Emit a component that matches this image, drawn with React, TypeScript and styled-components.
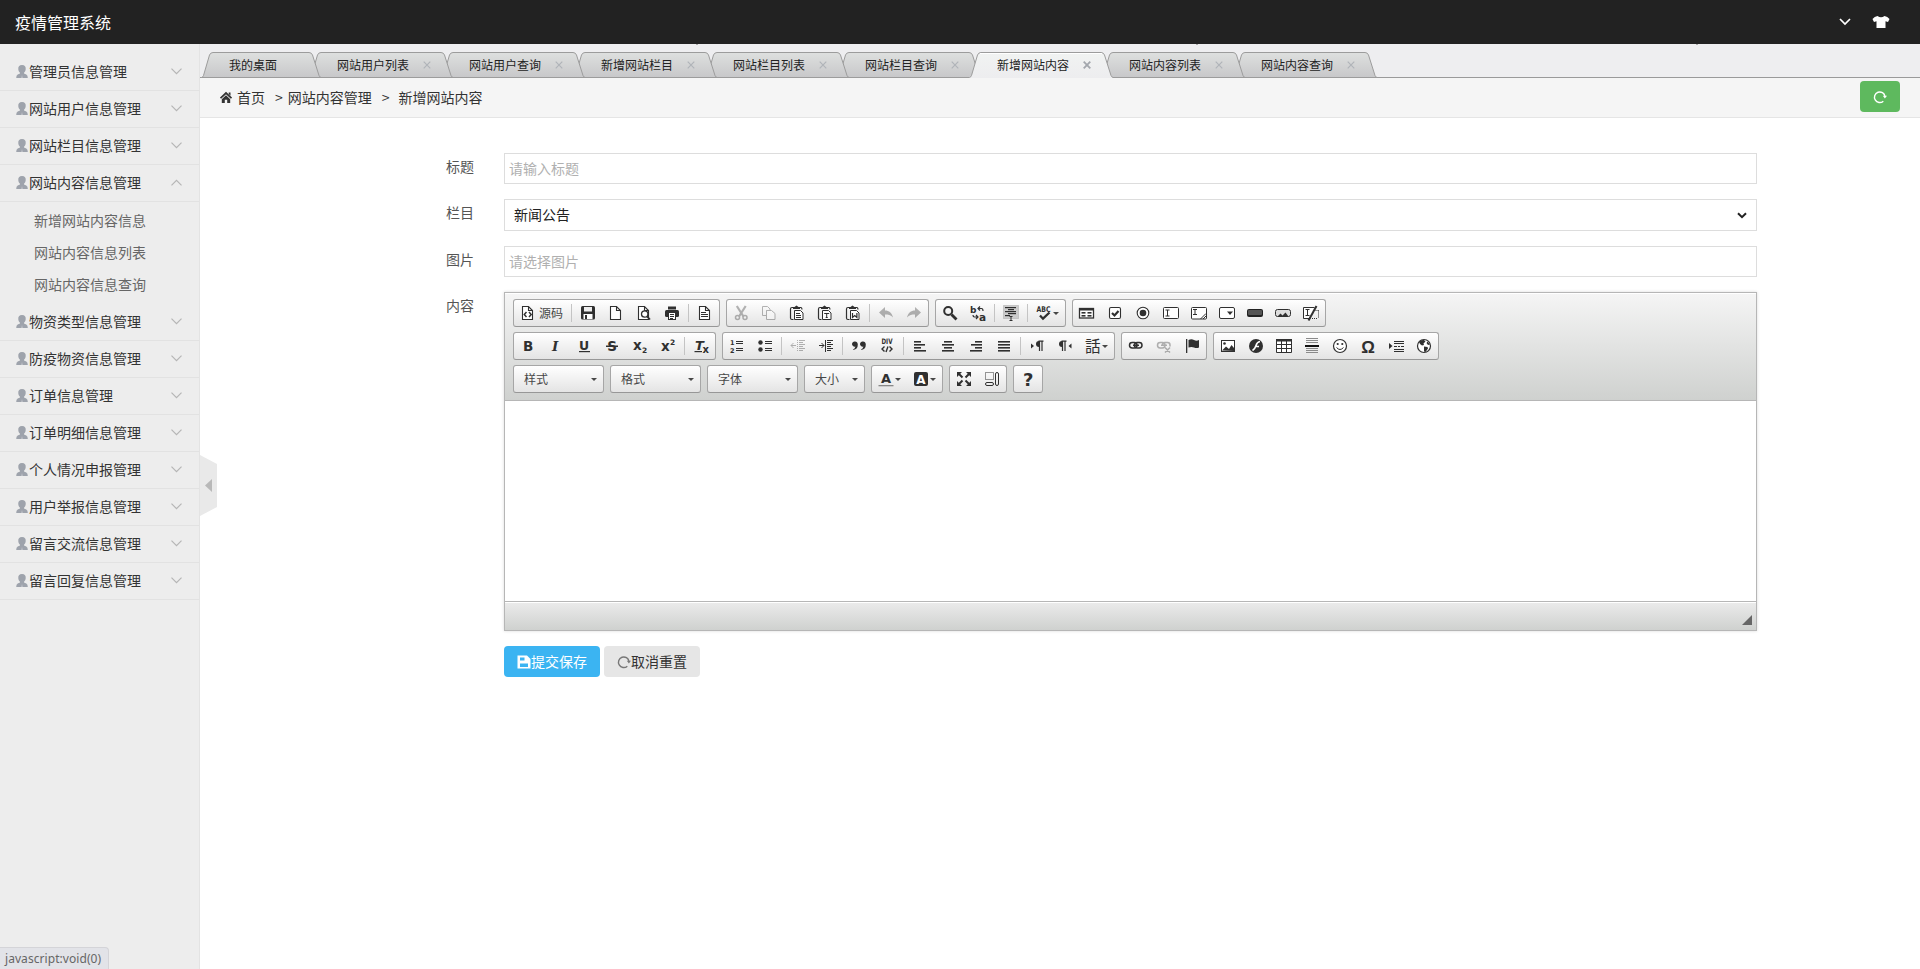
import React, { useState } from "react";
import styled, { createGlobalStyle } from "styled-components";

const GlobalStyle = createGlobalStyle`
  * { box-sizing: border-box; }
  html, body, #root { height: 100%; }
  body {
    margin: 0;
    overflow: hidden;
    background: #fff;
    color: #333;
    font-family: "Noto Sans CJK SC", sans-serif;
    font-size: 14px;
  }
`;

/* ---------- page frame ---------- */

const Page = styled.div`
  display: flex;
  flex-direction: column;
  height: 969px;
  width: 1920px;
  position: relative;
`;

const TopBar = styled.header`
  flex: 0 0 44px;
  display: flex;
  align-items: center;
  justify-content: space-between;
  padding: 0 30px 0 15px;
  background: #222;
  color: #fff;
`;

const Brand = styled.a`
  padding-bottom: 1px;
  font-size: 16px;
  line-height: 42px;
`;

const TopActions = styled.div`
  display: flex;
  align-items: center;
  gap: 21px;
  svg { display: block; }
`;

const Body = styled.div`
  flex: 1;
  display: flex;
  min-height: 0;
`;

const Sidebar = styled.aside`
  flex: 0 0 200px;
  padding-top: 10px;
  background: #ededed;
  border-right: 1px solid #e3e3e3;
`;

const MenuTitle = styled.div`
  display: flex;
  align-items: center;
  height: 37px;
  padding: 0 17px 0 16px;
  border-bottom: 1px solid #e2e2e2;
  color: #333;
  cursor: pointer;
`;

const MenuText = styled.span`
  flex: 1;
  padding: 0 0 2px 1px;
  line-height: 34px;
`;

const Arrow = styled.svg<{ $open?: boolean }>`
  margin-bottom: 2px;
  transform: ${(p) => (p.$open ? "rotate(180deg)" : "none")};
`;

const SubMenu = styled.ul`
  margin: 0;
  padding: 2px 0 4px 34px;
  list-style: none;
`;

const SubItem = styled.li`
  height: 32px;
  line-height: 32px;
  color: #666;
`;

const Main = styled.main`
  flex: 1;
  min-width: 0;
  position: relative;
`;

const Collapse = styled.svg`
  position: absolute;
  left: 0;
  top: 411px;
`;

/* ---------- tabs ---------- */

const TabStrip = styled.nav`
  display: flex;
  align-items: flex-end;
  height: 34px;
  padding-left: 1px;
  background:
    linear-gradient(90deg, transparent 496px, #aaa 496px, #aaa 498px, transparent 498px) 0 0 / 500px 1px repeat-x,
    linear-gradient(#9a9a9a, #9a9a9a) 0 100% / 100% 1px no-repeat,
    #eeeef0;
`;

const TabBox = styled.div<{ $order: number; $width: number }>`
  position: relative;
  z-index: ${(p) => p.$order};
  display: flex;
  align-items: center;
  gap: 14px;
  width: ${(p) => p.$width}px;
  height: 26px;
  margin-right: -12px;
  padding-left: 28px;
  font-size: 12px;
  line-height: 26px;
  color: #222;
`;

const TabShape = styled.svg`
  position: absolute;
  left: 0;
  top: 0;
  z-index: -1;
`;

/* ---------- breadcrumb ---------- */

const Crumbs = styled.div`
  display: flex;
  align-items: center;
  height: 40px;
  padding: 0 20px;
  background: #f5f5f5;
  border-bottom: 1px solid #e5e5e5;
  line-height: 39px;
`;

const Crumb = styled.span<{ $gap?: number }>`
  margin-left: ${(p) => p.$gap ?? 0}px;
`;

const RefreshButton = styled.button`
  display: flex;
  align-items: center;
  justify-content: center;
  width: 40px;
  height: 31px;
  margin: 0 0 2px auto;
  padding: 0;
  border: 0;
  border-radius: 4px;
  background: #5eb95e;
`;

/* ---------- form ---------- */

const Form = styled.form`
  display: flex;
  flex-direction: column;
  gap: 15px;
  padding-top: 35px;
`;

const Row = styled.div`
  display: grid;
  grid-template-columns: 274px 1253px;
  column-gap: 30px;
`;

const Label = styled.label`
  height: 28px;
  line-height: 26px;
  text-align: right;
  color: #555;
`;

const TextInput = styled.input`
  display: block;
  width: 100%;
  height: 31px;
  padding: 0 4px 1px;
  border: 1px solid #ddd;
  background: #fff;
  font: inherit;
  color: #333;
  outline: none;
  &::placeholder { color: #b0b0b0; }
`;

const SelectWrap = styled.div`
  display: flex;
  align-items: center;
  height: 32px;
  padding-right: 9px;
  border: 1px solid #ddd;
  background: #fff;
`;

const Select = styled.select`
  flex: 1;
  height: 30px;
  padding: 0 9px 2px;
  border: 0;
  appearance: none;
  background: transparent;
  font: inherit;
  color: #222;
  outline: none;
`;

const Actions = styled.div`
  display: flex;
  gap: 4px;
  padding-left: 304px;
`;

const Button = styled.button<{ $primary?: boolean }>`
  display: flex;
  align-items: center;
  justify-content: center;
  width: 96px;
  height: 31px;
  padding: 0;
  border: 0;
  border-radius: 4px;
  background: ${(p) => (p.$primary ? "#3bb4f2" : "#e6e6e6")};
  color: ${(p) => (p.$primary ? "#fff" : "#333")};
  font: inherit;
  line-height: 31px;
`;

/* ---------- rich text editor ---------- */

const Editor = styled.div`
  border: 1px solid #b6b6b6;
  box-shadow: 0 0 3px rgba(0, 0, 0, 0.15);
`;

const Toolbox = styled.div`
  display: flex;
  flex-direction: column;
  height: 108px;
  gap: 5px;
  padding: 6px 8px 0;
  border-bottom: 1px solid #b6b6b6;
  background: linear-gradient(#f5f5f5, #cfd1cf);
  box-shadow: inset 0 1px 0 #fff;
`;

const ToolRow = styled.div`
  display: flex;
  gap: 6px;
`;

const ToolGroup = styled.div<{ $width?: number }>`
  display: flex;
  align-items: center;
  width: ${(p) => (p.$width ? `${p.$width}px` : "auto")};
  height: 28px;
  border: 1px solid #a6a6a6;
  border-bottom-color: #979797;
  border-radius: 3px;
  background: linear-gradient(#fff, #e4e4e4);
`;

const ToolButton = styled.span<{ $disabled?: boolean }>`
  display: flex;
  align-items: center;
  height: 26px;
  padding: 0 6px;
  opacity: ${(p) => (p.$disabled ? 0.35 : 1)};
  svg { display: block; flex: none; }
`;

const ToolLabel = styled.span`
  width: 27px;
  padding-left: 3px;
  font-size: 12px;
  line-height: 24px;
  color: #474747;
  white-space: nowrap;
`;

const Separator = styled.span`
  width: 1px;
  height: 18px;
  margin: 0 2px;
  background: #c4c4c4;
`;

const Caret = styled.i<{ $combo?: boolean }>`
  margin-left: ${(p) => (p.$combo ? "auto" : "1px")};
  margin-right: ${(p) => (p.$combo ? "6px" : "0")};
  border: solid transparent;
  border-width: 3px 3px 0;
  border-top-color: #474747;
`;

const ComboLabel = styled.span`
  padding-left: 10px;
  font-size: 12px;
  line-height: 24px;
  color: #474747;
`;

const EditArea = styled.div`
  height: 200px;
  background: #fff;
`;

const EditorFoot = styled.div`
  display: flex;
  align-items: flex-end;
  justify-content: flex-end;
  height: 29px;
  padding: 0 4px 5px 0;
  border-top: 1px solid #b6b6b6;
  background: linear-gradient(#ebebeb, #cfd1cf);
  box-shadow: inset 0 1px 0 #fff;
`;

const StatusBubble = styled.div`
  position: absolute;
  left: 0;
  bottom: 0;
  width: 109px;
  height: 22px;
  padding-left: 5px;
  border: 1px solid #d4d4d8;
  border-width: 1px 1px 0 0;
  border-radius: 0 4px 0 0;
  background: #e2e3e8;
  font-family: "Noto Sans", sans-serif;
  font-size: 12px;
  letter-spacing: 0.06px;
  line-height: 21px;
  color: #666;
`;

/* ---------- icons ---------- */

const D = "#303030";
const line = { fill: "none", stroke: D, strokeWidth: 1 } as const;
const bold = { fontFamily: "DejaVu Sans, sans-serif", fontWeight: 700, fill: D } as const;
const doc = <path d="M2.500 1.500h6l4 4v9h-10zM8.500 1.500v4h4" fill="#fff" stroke={D} strokeWidth="1.100" />;
const board = (
  <>
    <path d="M4.500 14.500h-1.500q-1.500 0-1.500-1.500V4q0-1.500 1.500-1.500h1M10.500 2.500h1.500q1 .5 1 2" {...line} strokeWidth={1.200} />
    <path d="M4 4V2h1.500L7.500.500 9.500 2H11v2z" fill={D} />
    <path d="M5.500 5.500h6l2.500 2.500v6.500h-8.500z" fill="#fff" stroke={D} />
  </>
);
const bars = (rows: number[][]) => rows.map(([x, y, w, h = 1], i) => <rect key={i} x={x} y={y} width={w} height={h} fill={D} />);

const ICONS: Record<string, React.ReactNode> = {
  source: <>{doc}<path d="M6.500 7L4.300 9.500 6.500 12M9 7l2.200 2.500L9 12" {...line} strokeWidth={1.500} /></>,
  save: (
    <>
      <rect x="1" y="1" width="14" height="13.500" rx="1.500" fill={D} />
      <rect x="4" y="2" width="8" height="4.500" fill="#eee" />
      <rect x="3.500" y="9" width="9" height="5" fill="#fff" />
      <rect x="5" y="10" width="2" height="4" fill={D} />
    </>
  ),
  newpage: doc,
  preview: <>{doc}<circle cx="8.700" cy="9" r="3.200" fill="#fff" stroke={D} strokeWidth="1.300" /><path d="M11 11.300l3 3.200" stroke={D} strokeWidth="1.800" /></>,
  print: (
    <>
      <rect x="4" y="1.500" width="8" height="3" fill={D} />
      <rect x="1" y="5" width="14" height="7" rx="1.500" fill={D} />
      <rect x="4.500" y="7.500" width="7" height="7" fill="#fff" stroke={D} />
      {bars([[6, 9, 4], [6, 11, 4], [6, 13, 3]])}
    </>
  ),
  templates: <>{doc}{bars([[4, 7, 5], [4, 9, 7], [4, 11, 7]])}</>,
  cut: (
    <g {...line} strokeWidth={2.200}>
      <path d="M3.800 1l6.700 10.500M12.700 1L6 11.500" />
      <circle cx="4.500" cy="12.500" r="2" strokeWidth="1.500" />
      <circle cx="12" cy="12.500" r="2" strokeWidth="1.500" />
    </g>
  ),
  copy: <g {...line}><path d="M1.500 1.500h5l2.500 2.500v1.500h-3.500v5h-4z" /><path d="M5.500 5.500h5l3.500 3v6h-8.500z" fill="#fff" /></g>,
  paste: <>{board}{bars([[7, 8, 4], [7, 10, 5], [7, 12, 5]])}</>,
  pastetext: <>{board}<path d="M7.200 8.500h5M9.700 8.500v4.500M8.700 12.500h2" {...line} /></>,
  pasteword: <>{board}<path d="M7.500 8v4.500l2.200-2 2.200 2V8" {...line} strokeWidth={1.200} /></>,
  undo: <path d="M1 7.500L7 2v3.500c4 0 7 2.500 8 7-2-2.500-5-3-8-3V13z" fill={D} />,
  redo: <path d="M15 7.500L9 2v3.500c-4 0-7 2.500-8 7 2-2.500 5-3 8-3V13z" fill={D} />,
  find: <><circle cx="6.200" cy="6" r="4" fill="none" stroke={D} strokeWidth="2" /><path d="M9.500 9.500l5 5" stroke={D} strokeWidth="2.800" /></>,
  replace: (
    <>
      <text x="0" y="7.500" fontSize="9" {...bold}>b</text>
      <text x="9" y="15.500" fontSize="10.500" {...bold}>a</text>
      <path d="M8 3.500h3.500q1.500 0 1.500 2.500M10 1.500l-2 2 2 2M3 10q0 2 1.500 2H8M6 10l2 2-2 2" {...line} strokeWidth={1.200} />
    </>
  ),
  selectall: (
    <>
      <rect x="0.500" y="0.500" width="15" height="13" fill="#ccc" stroke="#aaa" strokeDasharray="1 1" />
      {bars([[2, 2, 11, 1.200], [5, 4, 6, 1.200], [2, 6, 11, 1.200], [5, 8, 8, 1.200], [2, 10, 5, 1.200]])}
      <path d="M6.500 11.500h3M6.500 15.500h3M8 11.500v4" {...line} />
    </>
  ),
  spell: <><text x="0.500" y="7.300" fontSize="7.800" textLength="14" lengthAdjust="spacingAndGlyphs" {...bold}>ABC</text><path d="M4 10.500l3 3.200L13.500 7.500" {...line} strokeWidth={2.300} /></>,
  form: <><rect x="0.500" y="3.500" width="14" height="9.500" fill="#fff" stroke={D} strokeWidth="1.300" />{bars([[0, 3, 15, 2.500], [2.500, 7, 4, 1.600], [2.500, 10, 4, 1.600], [8.500, 7, 4, 1.600], [8.500, 10, 4, 1.600]])}</>,
  checkbox: <><rect x="2.500" y="2.500" width="11" height="11" rx="1.500" fill="#fff" stroke={D} strokeWidth="1.100" /><path d="M5 8l2.500 2.500L11.500 6" {...line} strokeWidth={2.200} /></>,
  radio: <><circle cx="8" cy="8" r="5.800" fill="#fff" stroke={D} strokeWidth="1.100" /><circle cx="8" cy="8" r="3.300" fill={D} /></>,
  textfield: <><rect x="0.500" y="2.500" width="15" height="11" rx="1" fill="#fff" stroke={D} /><path d="M2.500 5h4M2.500 11h4M4.500 5v6" {...line} /></>,
  textarea: <><rect x="0.500" y="2.500" width="15" height="11.500" rx="1" fill="#fff" stroke={D} /><path d="M2 4.500h4M2 9.500h4M4 4.500v5M9.500 14L15 8.500M12 14l3-3" {...line} /></>,
  select: <><rect x="0.500" y="2.500" width="15" height="11" rx="1.500" fill="#fff" stroke={D} /><path d="M8 6.500h6L11 10z" fill={D} /></>,
  button: <><rect x="0" y="4" width="16" height="8" rx="2" fill="#222" /><rect x="1" y="5" width="14" height="5" rx="1" fill="#555" /></>,
  imagebutton: <><rect x="0.500" y="4.500" width="15" height="7" rx="2" fill="#ddd" stroke={D} /><path d="M2.500 11.500l3-3 2 2 3-3 3 4z" fill={D} /></>,
  hidden: <><path d="M7.500 13.500h-7v-11h11" fill="#fff" stroke={D} /><path d="M2.500 4.500h4M2.500 10.500h4M4.500 4.500v6" {...line} /><path d="M12.500 5.500h3M15.500 5.500v8M9 13.500h6" {...line} strokeDasharray="1 1" /><path d="M5.500 15.500L13.500 1" stroke={D} strokeWidth="2" /></>,
  bold: <text x="3" y="13" fontSize="13.500" {...bold}>B</text>,
  italic: <text x="4" y="13" fontSize="13.500" fontStyle="italic" {...bold} fontFamily="DejaVu Serif">I</text>,
  underline: <><text x="3" y="11.500" fontSize="12.500" {...bold}>U</text><rect x="3" y="13" width="11" height="1.200" fill={D} /></>,
  strike: <><text x="3.300" y="13" fontSize="13.500" {...bold}>S</text><rect x="2" y="7.500" width="12" height="1.500" fill={D} /></>,
  sub: <><text x="1" y="11.500" fontSize="13.500" {...bold}>x</text><text x="10" y="15" fontSize="7.500" {...bold}>2</text></>,
  sup: <><text x="1" y="13" fontSize="13.500" {...bold}>x</text><text x="10" y="7" fontSize="7.500" {...bold}>2</text></>,
  removeformat: <><text x="2" y="11.500" fontSize="13" fontStyle="italic" {...bold}>T</text><rect x="1.500" y="13" width="7.500" height="1.200" fill={D} /><text x="9.500" y="15" fontSize="10" {...bold}>x</text></>,
  ol: <><text x="1" y="6.500" fontSize="6.500" {...bold}>1</text><text x="1" y="14.500" fontSize="6.500" {...bold}>2</text>{bars([[7, 3, 7], [7, 5, 7], [7, 10, 7], [7, 12, 7]])}</>,
  ul: <><circle cx="3.500" cy="4.500" r="2.200" fill={D} /><circle cx="3.500" cy="11.500" r="2.200" fill={D} />{bars([[8, 3, 7], [8, 5, 7], [8, 10, 7], [8, 12, 7]])}</>,
  outdent: <>{bars([[9, 2, 6], [9, 4, 4], [9, 6, 6], [9, 8, 4], [9, 10, 6], [9, 12, 4]])}<path d="M1 7.500h5M3.500 5L1 7.500 3.500 10" {...line} /><path d="M7.500 2v12" {...line} strokeDasharray="1 1" /></>,
  indent: <>{bars([[9, 2, 6], [9, 4, 4], [9, 6, 6], [9, 8, 4], [9, 10, 6], [9, 12, 4]])}<path d="M1 7.500h5M3.500 5L6 7.500 3.500 10" {...line} /><path d="M7.500 2v12" {...line} /></>,
  quote: <path d="M4 3.500a2.600 2.600 0 1 0 .5 5Q4 10.500 1.500 12 7 11.500 6.800 6.500 6.600 3.500 4 3.500zM12 3.500a2.600 2.600 0 1 0 .5 5Q12 10.500 9.500 12 15 11.500 14.800 6.500 14.600 3.500 12 3.500z" fill={D} />,
  div: <><text x="2.500" y="6.300" fontSize="7.500" textLength="11" lengthAdjust="spacingAndGlyphs" {...bold}>DIV</text><path d="M5.500 8.500L3 11l2.500 2.500M10.500 8.500L13 11l-2.500 2.500M9 8.500l-2 5.500" {...line} strokeWidth={1.400} /></>,
  left: bars([[2, 3, 7, 1.600], [2, 6, 11, 1.600], [2, 9, 7, 1.600], [2, 12, 12, 1.600]]),
  center: bars([[4, 3, 8, 1.600], [2, 6, 12, 1.600], [4, 9, 8, 1.600], [2, 12, 12, 1.600]]),
  right: bars([[7, 3, 7, 1.600], [3, 6, 11, 1.600], [7, 9, 7, 1.600], [2, 12, 12, 1.600]]),
  justify: bars([[2, 3, 12, 1.600], [2, 6, 12, 1.600], [2, 9, 12, 1.600], [2, 12, 12, 1.600]]),
  ltr: <><path d="M2 5.500v5L5 8z" fill={D} /><path d="M10 3a3 3 0 0 0 0 6z" fill={D} /><path d="M10.500 3v10M13 3v10M9.500 3.200h5" {...line} strokeWidth={1.200} /></>,
  rtl: <><path d="M14.500 5.500v5L11.500 8z" fill={D} /><path d="M5 3a3 3 0 0 0 0 6z" fill={D} /><path d="M5.500 3v10M8 3v10M4.500 3.200h5" {...line} strokeWidth={1.200} /></>,
  lang: <text x="0" y="13.500" fontSize="15.500" fontFamily="Noto Sans CJK JP" fill={D}>話</text>,
  link: <g {...line} strokeWidth={1.500}><rect x="1.500" y="4.500" width="7.500" height="5.500" rx="2.700" /><rect x="6.500" y="4.500" width="7.500" height="5.500" rx="2.700" /><path d="M5 7.300h6" /></g>,
  unlink: <g {...line} strokeWidth={1.500}><rect x="1.500" y="4.500" width="7.500" height="5.500" rx="2.700" /><path d="M6.500 8V7a2.500 2.500 0 0 1 2.500-2.500h2.500Q14 4.500 14 7v1.500M5 7.300h6M9 9.500l5 5M14 9.500l-5 5" /></g>,
  anchor: <><rect x="2" y="1" width="1.300" height="14" fill={D} /><path d="M4.500 2q3-1.500 5.500 0t5 0v7.500q-2.500 1.200-5 0t-5.500 0z" fill={D} /></>,
  image: <><rect x="1.500" y="2.500" width="13" height="11" fill="#fff" stroke={D} /><circle cx="4.500" cy="5.500" r="1.300" fill={D} /><path d="M2 12.500l4-4 3 2.500 2.500-4 2.500 3v3z" fill={D} /></>,
  flash: <><circle cx="8" cy="8" r="7" fill={D} /><path d="M12 3.500Q9 4 8 7.500T4.500 12.500M7 8.500h4" fill="none" stroke="#fff" strokeWidth="1.600" /></>,
  table: <><path d="M.5 2.500h15v12H.5zM5.500 3v11.500M10.500 3v11.500M.5 6.500h15M.5 10.500h15" fill="#fff" stroke={D} /><rect x="0" y="1" width="16" height="2.500" fill={D} /></>,
  hr: <>{[0, 2, 4, 10, 12, 14].map((y) => <rect key={y} x="2" y={y} width="12" height="1" fill="#8a8a8a" />)}<rect x="1" y="7" width="14" height="2" fill="#111" /></>,
  smiley: <><circle cx="8" cy="8" r="6.500" fill="#fff" stroke={D} strokeWidth="1.200" /><circle cx="5.700" cy="6" r="1.100" fill={D} /><circle cx="10.300" cy="6" r="1.100" fill={D} /><path d="M4.500 9.500q3.500 4 7 0" {...line} /></>,
  special: <text x="1.200" y="14.500" fontSize="17" {...bold} fontFamily="Liberation Sans">Ω</text>,
  pagebreak: <><path d="M1 5v6l3.500-3z" fill={D} />{bars([[6, 3, 10, 1], [6, 5, 10, 1], [6, 8, 3, 1], [10, 8, 2, 1], [13, 8, 3, 1], [6, 11, 10, 1], [6, 13, 10, 1]])}</>,
  iframe: <><circle cx="8" cy="8" r="6.500" fill="#fff" stroke={D} strokeWidth="1.200" /><path d="M3 4Q5 1.500 8 2l1.500 1.500-2 2 .5 1.500-2 .5L4 6zM8 8.500l3.500.5 .5 1.500-2.500 3.500-1.500-.5zM11.500 3.500l2.500 3-2 .5-1.500-2z" fill={D} /></>,
  color: <><text x="3" y="12" fontSize="13" {...bold}>A</text><rect x="0.500" y="14" width="15" height="1.300" fill="#888" /></>,
  bgcolor: <><rect x="1" y="1" width="14" height="14" rx="2" fill={D} /><text x="3.300" y="12.500" fontSize="12" {...bold} fill="#fff">A</text></>,
  maximize: <><path d="M3 3l3.500 3.500M13 3L9.500 6.500M3 13l3.500-3.500M13 13L9.500 9.500" stroke={D} strokeWidth="2" /><path d="M1 1h5L1 6zM15 1h-5l5 5zM1 15h5l-5-5zM15 15h-5l5-5z" fill={D} /></>,
  blocks: <g {...line}><rect x="1.500" y="1.500" width="8" height="7" strokeDasharray="1 1" /><rect x="1.500" y="11.500" width="8" height="3" rx="1.500" /><rect x="11.500" y="1.500" width="3" height="13" rx="1.500" /></g>,
  help: <text x="3" y="15" fontSize="18" {...bold}>?</text>,
};

const DISABLED = new Set(["cut", "copy", "undo", "redo", "outdent", "unlink"]);
const DROPDOWN = new Set(["spell", "lang", "color", "bgcolor"]);

const Glyph = ({ name }: { name: string }) => (
  <svg width="16" height="16" viewBox="0 0 16 16" overflow="visible">{ICONS[name]}</svg>
);

const Tools = ({ items }: { items: string }) => (
  <ToolGroup>
    {items.split(" ").map((name, i) =>
      name === "|" ? (
        <Separator key={i} />
      ) : (
        <ToolButton key={i} $disabled={DISABLED.has(name)}>
          <Glyph name={name} />
          {name === "source" && <ToolLabel>源码</ToolLabel>}
          {DROPDOWN.has(name) && <Caret />}
        </ToolButton>
      )
    )}
  </ToolGroup>
);

const Combo = ({ label, width }: { label: string; width: number }) => (
  <ToolGroup $width={width}>
    <ComboLabel>{label}</ComboLabel>
    <Caret $combo />
  </ToolGroup>
);

const PersonIcon = () => (
  <svg width="12" height="14" viewBox="0 0 12 14">
    <path d="M6 0C3.200 0 2 1.700 2.300 4.200c.1 1.500.7 2.700 1.700 3.500v.8L1.700 9.500Q.2 10.300.2 13h11.600q0-2.700-1.500-3.500L8 8.500v-.8c1-.8 1.600-2 1.700-3.500C10 1.700 8.800 0 6 0z" fill="#9ea3ac" />
    <path d="M6 10l-.8 3h1.600z" fill="#c2c5cb" />
  </svg>
);

const HomeIcon = () => (
  <svg width="12" height="13" viewBox="0 0 12 13">
    <path d="M.5 7.200L6 2l5.500 5.200" fill="none" stroke="#333" strokeWidth="1.800" />
    <path d="M6 4.200L1.800 8.300V12h3V8.800h2.400V12h3V8.300zM8.700 1.500h1.800v3.200L8.700 3z" fill="#333" />
  </svg>
);

const ReloadIcon = ({ color }: { color: string }) => (
  <svg width="14" height="14" viewBox="0 0 14 14">
    <path d="M10.300 11.200A5.300 5.300 0 1 1 12 6.500" fill="none" stroke={color} strokeWidth="1.400" />
    <path d="M9.800 5.700h4.200l-2.100 2.800z" fill={color} />
  </svg>
);

const DiskIcon = () => (
  <svg width="14" height="14" viewBox="0 0 14 14">
    <path d="M.5.500h9.500L13.500 4v9.500H.5z" fill="#fff" />
    <path d="M3 2.500h4.500v3H3zM3 8.500h8v3.500H3z" fill="#3bb4f2" />
  </svg>
);

/* ---------- data ---------- */

const MENUS: { title: string; children?: string[] }[] = [
  { title: "管理员信息管理" },
  { title: "网站用户信息管理" },
  { title: "网站栏目信息管理" },
  { title: "网站内容信息管理", children: ["新增网站内容信息", "网站内容信息列表", "网站内容信息查询"] },
  { title: "物资类型信息管理" },
  { title: "防疫物资信息管理" },
  { title: "订单信息管理" },
  { title: "订单明细信息管理" },
  { title: "个人情况申报管理" },
  { title: "用户举报信息管理" },
  { title: "留言交流信息管理" },
  { title: "留言回复信息管理" },
];

const TABS = ["我的桌面", "网站用户列表", "网站用户查询", "新增网站栏目", "网站栏目列表", "网站栏目查询", "新增网站内容", "网站内容列表", "网站内容查询"];

const Tab = ({ title, index, active, onSelect }: { title: string; index: number; active: boolean; onSelect: () => void }) => {
  const w = index === 0 ? 120 : 144;
  const outline = `M.5 25.500Q2 25 2.500 23.500L8.500 3Q9.500 .5 12 .5H${w - 12}Q${w - 9.500} .5 ${w - 8.500} 3L${w - 2} 23.500Q${w - 1.500} 25 ${w} 25.500`;
  return (
    <TabBox $order={active ? 20 : 10 - index} $width={w} onClick={onSelect}>
      <TabShape width={w} height="26">
        <defs>
          <linearGradient id={`tab${index}`} x1="0" y1="0" x2="0" y2="1">
            <stop offset="0" stopColor={active ? "#f1f3f2" : "#dee0df"} />
            <stop offset="1" stopColor={active ? "#ededef" : "#c7c7c9"} />
          </linearGradient>
        </defs>
        <path d={outline + `V26H0z`} fill={`url(#tab${index})`} />
        <path d={outline + (active ? "" : "z")} fill="none" stroke="#9c9c9c" />
        {active && <path d={`M11 1.500H${w - 11}`} stroke="#fff" />}
      </TabShape>
      {title}
      {index > 0 && (
        <svg width="8" height="8" viewBox="0 0 8 8">
          <path d="M.7.700l6.600 6.600M7.300.700L.7 7.300" stroke={active ? "#a3a7ad" : "#b0b4b9"} strokeWidth={active ? 1.800 : 1.200} />
        </svg>
      )}
    </TabBox>
  );
};

export default function App() {
  const [open, setOpen] = useState(3);
  const [tab, setTab] = useState(6);

  return (
    <>
      <GlobalStyle />
      <Page>
        <TopBar>
          <Brand>疫情管理系统</Brand>
          <TopActions>
            <svg width="12" height="8" viewBox="0 0 12 8"><path d="M1 1l5 5 5-5" fill="none" stroke="#fff" strokeWidth="1.700" /></svg>
            <svg width="18" height="12" viewBox="0 0 18 12">
              <path d="M5.500 0Q9 2.500 12.500 0q3 .5 5 3l-1.500 3-2.500-.7V12h-9V5.300L2 6 .5 3q2-2.500 5-3z" fill="#fff" />
            </svg>
          </TopActions>
        </TopBar>
        <Body>
          <Sidebar>
            {MENUS.map((m, i) => (
              <React.Fragment key={m.title}>
                <MenuTitle onClick={() => setOpen(open === i ? -1 : i)}>
                  <PersonIcon />
                  <MenuText>{m.title}</MenuText>
                  <Arrow width="11" height="7" viewBox="0 0 11 7" $open={open === i}>
                    <path d="M.5.700l5 5 5-5" fill="none" stroke="#b5b5b5" strokeWidth="1.200" />
                  </Arrow>
                </MenuTitle>
                {open === i && m.children && (
                  <SubMenu>{m.children.map((c) => <SubItem key={c}>{c}</SubItem>)}</SubMenu>
                )}
              </React.Fragment>
            ))}
          </Sidebar>
          <Main>
            <TabStrip>
              {TABS.map((t, i) => <Tab key={t} title={t} index={i} active={tab === i} onSelect={() => setTab(i)} />)}
            </TabStrip>
            <Crumbs>
              <HomeIcon />
              <Crumb $gap={5}>首页</Crumb>
              <Crumb $gap={10}>&gt;</Crumb>
              <Crumb $gap={5}>网站内容管理</Crumb>
              <Crumb $gap={10}>&gt;</Crumb>
              <Crumb $gap={9}>新增网站内容</Crumb>
              <RefreshButton type="button"><ReloadIcon color="#fff" /></RefreshButton>
            </Crumbs>
            <Form onSubmit={(e) => e.preventDefault()}>
              <Row>
                <Label>标题</Label>
                <TextInput placeholder="请输入标题" />
              </Row>
              <Row>
                <Label>栏目</Label>
                <SelectWrap>
                  <Select defaultValue="news"><option value="news">新闻公告</option></Select>
                  <svg width="10" height="7" viewBox="0 0 10 7"><path d="M1 1.200l4 4 4-4" fill="none" stroke="#222" strokeWidth="2" /></svg>
                </SelectWrap>
              </Row>
              <Row>
                <Label>图片</Label>
                <TextInput placeholder="请选择图片" />
              </Row>
              <Row>
                <Label>内容</Label>
                <Editor>
                  <Toolbox>
                    <ToolRow>
                      <Tools items="source | save newpage preview print | templates" />
                      <Tools items="cut copy paste pastetext pasteword | undo redo" />
                      <Tools items="find replace | selectall | spell" />
                      <Tools items="form checkbox radio textfield textarea select button imagebutton hidden" />
                    </ToolRow>
                    <ToolRow>
                      <Tools items="bold italic underline strike sub sup | removeformat" />
                      <Tools items="ol ul | outdent indent | quote div | left center right justify | ltr rtl lang" />
                      <Tools items="link unlink anchor" />
                      <Tools items="image flash table hr smiley special pagebreak iframe" />
                    </ToolRow>
                    <ToolRow>
                      <Combo label="样式" width={91} />
                      <Combo label="格式" width={91} />
                      <Combo label="字体" width={91} />
                      <Combo label="大小" width={61} />
                      <Tools items="color bgcolor" />
                      <Tools items="maximize blocks" />
                      <Tools items="help" />
                    </ToolRow>
                  </Toolbox>
                  <EditArea contentEditable suppressContentEditableWarning />
                  <EditorFoot>
                    <svg width="10" height="10" viewBox="0 0 10 10"><path d="M10 0v10H0z" fill="#666" /></svg>
                  </EditorFoot>
                </Editor>
              </Row>
              <Actions>
                <Button type="submit" $primary><DiskIcon />提交保存</Button>
                <Button type="reset"><ReloadIcon color="#777" />取消重置</Button>
              </Actions>
            </Form>
            <Collapse width="18" height="62" viewBox="0 0 18 62">
              <path d="M0 0l17 9v43L0 61z" fill="#e9e9e9" />
              <path d="M5 30.500L12 24v13z" fill="#b8b8b8" />
            </Collapse>
          </Main>
        </Body>
        <StatusBubble>javascript:void(0)</StatusBubble>
      </Page>
    </>
  );
}
